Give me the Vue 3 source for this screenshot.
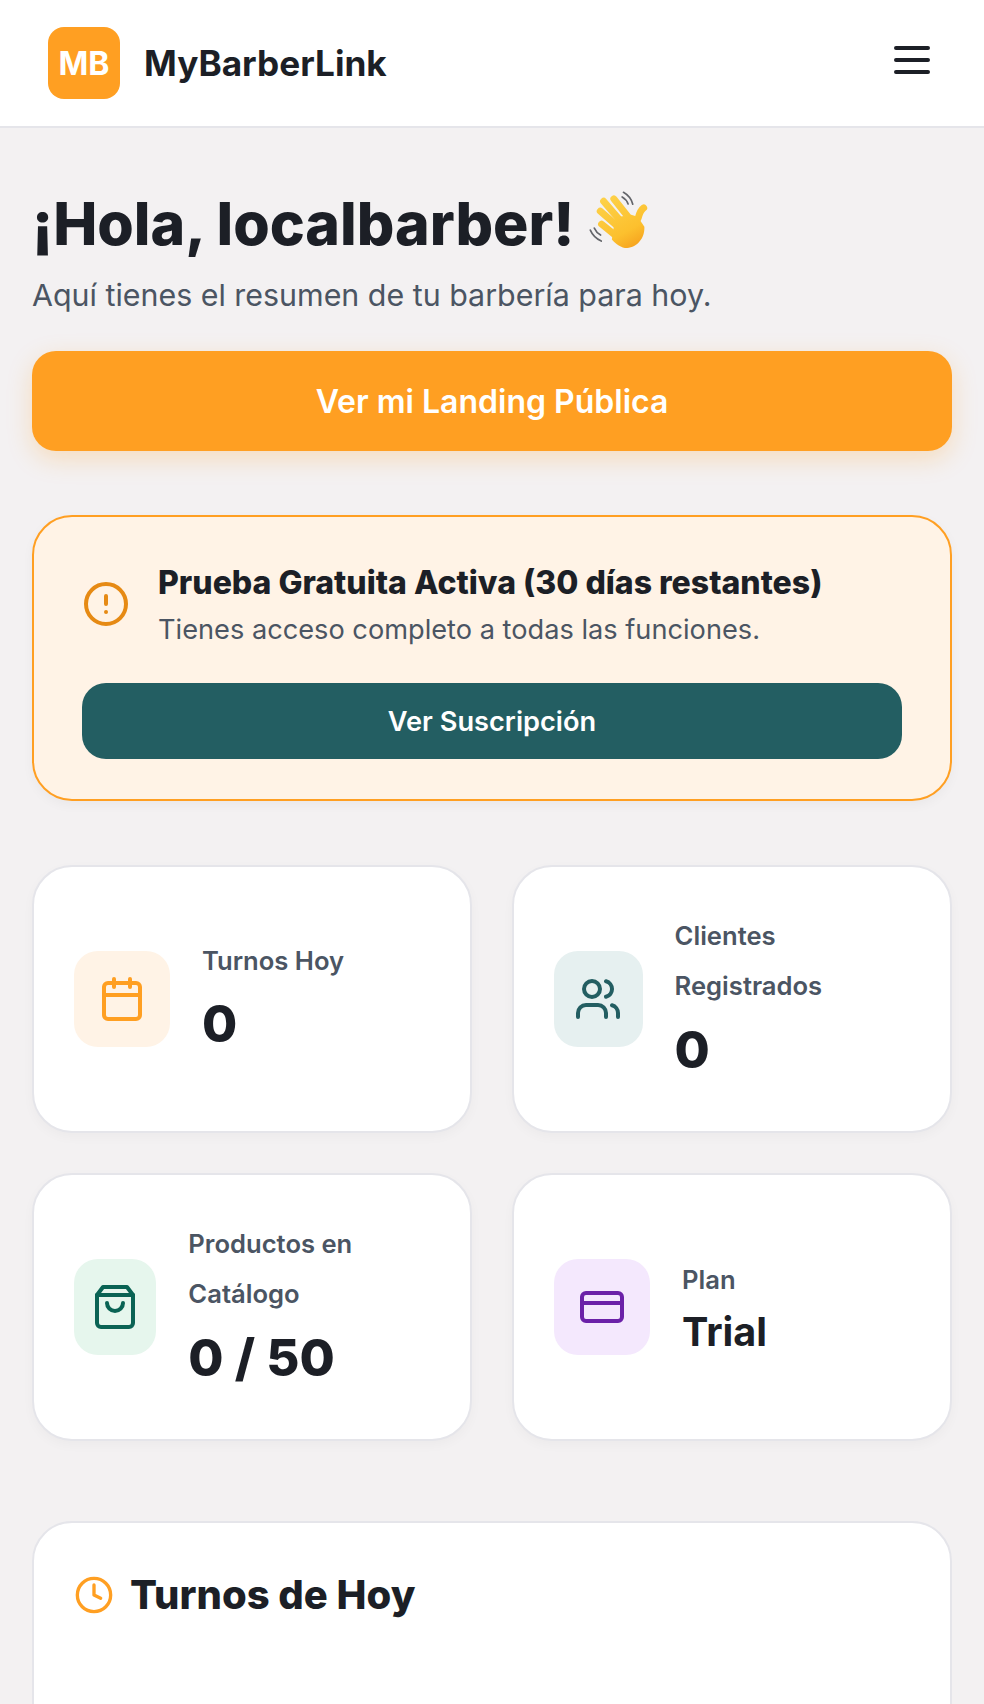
<script setup>
const stats = [
  { key: 'turnos', label: 'Turnos Hoy', value: '0', tone: 'orange' },
  { key: 'clientes', label: 'Clientes Registrados', value: '0', tone: 'teal' },
  { key: 'productos', label: 'Productos en Catálogo', value: '0 / 50', tone: 'green' },
  { key: 'plan', label: 'Plan', value: 'Trial', tone: 'purple', small: true }
]
</script>

<template>
  <div class="page">
    <header class="topbar">
      <div class="brand">
        <div class="logo">MB</div>
        <span class="brand-name">MyBarberLink</span>
      </div>
      <button class="menu-btn" aria-label="Menú">
        <svg viewBox="0 0 24 24" width="48" height="48" fill="none" stroke="currentColor" stroke-width="2" stroke-linecap="round" stroke-linejoin="round">
          <path d="M4 6h16M4 12h16M4 18h16" />
        </svg>
      </button>
    </header>

    <main class="content">
      <section class="welcome">
        <h1 class="greeting">
          <span>¡Hola, localbarber!</span>
          <svg class="wave" viewBox="50 60 190 190" width="63" height="63" aria-hidden="true">
            <defs>
              <linearGradient id="handFill" gradientUnits="userSpaceOnUse" x1="100" y1="80" x2="190" y2="240">
                <stop offset="0" stop-color="#fdd24a" />
                <stop offset="0.7" stop-color="#fcc02e" />
                <stop offset="1" stop-color="#f6a21e" />
              </linearGradient>
            </defs>
            <g fill="none" stroke-linecap="round">
              <g stroke="#63656a" stroke-width="5">
                <path d="M160 70c14 8 24 20 28 36" />
                <path d="M156 84c9 5 15 12 18 21" />
                <path d="M60 184c6 14 18 26 33 33" />
                <path d="M72 178c4 9 10 16 19 21" />
              </g>
              <g stroke="url(#handFill)" stroke-width="21">
                <path d="M100 97l52 60" />
                <path d="M131 90l46 58" />
                <path d="M90 127l58 50" />
                <path d="M94 166l50 40" />
                <path d="M221 117c-9 6-13 16-17 32" />
              </g>
            </g>
            <path d="M135 146l48-8 20 6 20 30c2 34-22 62-52 64-18 0-34-12-46-26z" fill="url(#handFill)" />
          </svg>
        </h1>
        <p class="subtitle">Aquí tienes el resumen de tu barbería para hoy.</p>
        <a class="landing-btn">Ver mi Landing Pública</a>
      </section>

      <section class="trial">
        <div class="trial-head">
          <svg class="trial-icon" viewBox="0 0 24 24" width="48" height="48" fill="none" stroke="currentColor" stroke-width="2" stroke-linecap="round" stroke-linejoin="round">
            <circle cx="12" cy="12" r="10" />
            <path d="M12 8v4M12 16h.01" />
          </svg>
          <div class="trial-body">
            <h2 class="trial-title">Prueba Gratuita Activa (30 días restantes)</h2>
            <p class="trial-text">Tienes acceso completo a todas las funciones.</p>
          </div>
        </div>
        <a class="trial-btn">Ver Suscripción</a>
      </section>

      <section class="stats">
        <article v-for="s in stats" :key="s.key" class="stat">
          <div class="stat-icon" :class="s.tone">
            <svg viewBox="0 0 24 24" width="48" height="48" fill="none" stroke="currentColor" stroke-width="2" stroke-linecap="round" stroke-linejoin="round">
              <template v-if="s.key === 'turnos'">
                <path d="M8 2v4M16 2v4" />
                <rect x="3" y="4" width="18" height="18" rx="2" />
                <path d="M3 10h18" />
              </template>
              <template v-else-if="s.key === 'clientes'">
                <path d="M16 21v-2a4 4 0 0 0-4-4H6a4 4 0 0 0-4 4v2" />
                <circle cx="9" cy="7" r="4" />
                <path d="M22 21v-2a4 4 0 0 0-3-3.87M16 3.13a4 4 0 0 1 0 7.75" />
              </template>
              <template v-else-if="s.key === 'productos'">
                <path d="M6 2 3 6v14a2 2 0 0 0 2 2h14a2 2 0 0 0 2-2V6l-3-4Z" />
                <path d="M3 6h18" />
                <path d="M16 10a4 4 0 0 1-8 0" />
              </template>
              <template v-else>
                <rect x="2" y="5" width="20" height="14" rx="2" />
                <path d="M2 10h20" />
              </template>
            </svg>
          </div>
          <div class="stat-body">
            <p class="stat-label">{{ s.label }}</p>
            <p class="stat-value" :class="{ small: s.small }">{{ s.value }}</p>
          </div>
        </article>
      </section>

      <section class="panel">
        <h2 class="panel-title">
          <svg viewBox="0 0 24 24" width="40" height="40" fill="none" stroke="#ff9f22" stroke-width="2" stroke-linecap="round" stroke-linejoin="round">
            <circle cx="12" cy="12" r="10" />
            <path d="M12 6v6l4 2" />
          </svg>
          Turnos de Hoy
        </h2>
      </section>
    </main>
  </div>
</template>

<style scoped>
.page {
  height: 1704px;
  overflow: hidden;
  background: #f3f1f2;
  color: #1c1f26;
  font-family: Inter, "Liberation Sans", sans-serif;
}

.topbar {
  display: flex;
  align-items: center;
  justify-content: space-between;
  height: 128px;
  box-sizing: border-box;
  padding: 0 48px;
  background: #fff;
  border-bottom: 2px solid #e5e5ea;
}

.brand {
  display: flex;
  align-items: center;
  gap: 24px;
}

.logo {
  display: flex;
  align-items: center;
  justify-content: center;
  width: 72px;
  height: 72px;
  border-radius: 16px;
  background: #ff9f22;
  color: #fff;
  font-size: 32px;
  font-weight: 700;
}

.brand-name {
  font-size: 35.2px;
  font-weight: 700;
}

.menu-btn {
  display: block;
  height: 48px;
  margin-bottom: 6px;
  padding: 0;
  border: 0;
  background: none;
  color: #1c1f26;
}

.menu-btn svg {
  display: block;
}

.content {
  padding: 60px 32px 0;
}

.greeting {
  display: flex;
  align-items: center;
  gap: 13px;
  margin: 0;
  font-size: 59px;
  font-weight: 800;
  line-height: 72px;
}

.wave {
  margin-top: -7px;
}

.subtitle {
  margin: 11px 0 0;
  font-size: 30.4px;
  line-height: 48px;
  color: #4b5563;
}

.landing-btn {
  display: flex;
  align-items: center;
  justify-content: center;
  height: 100px;
  margin-top: 32px;
  border-radius: 24px;
  background: #ff9f22;
  color: #fff;
  font-size: 32px;
  font-weight: 600;
  box-shadow: 0 8px 24px rgba(255, 159, 34, 0.25);
}

.trial {
  margin-top: 64px;
  padding: 40px 48px;
  border: 2px solid #ff9f22;
  border-radius: 40px;
  background: #fff3e6;
  box-shadow: 0 4px 12px rgba(0, 0, 0, 0.04);
}

.trial-head {
  display: flex;
  align-items: center;
  gap: 28px;
}

.trial-icon {
  flex: none;
  margin-bottom: 2px;
  color: #e68a14;
}

.trial-body {
  padding-top: 2px;
}

.trial-title {
  margin: 0;
  font-size: 32px;
  font-weight: 800;
  line-height: 48px;
}

.trial-text {
  margin: 0;
  font-size: 27.2px;
  line-height: 46px;
  color: #4b5563;
}

.trial-btn {
  display: flex;
  align-items: center;
  justify-content: center;
  height: 76px;
  margin-top: 30px;
  border-radius: 24px;
  background: #235e62;
  color: #fff;
  font-size: 27.2px;
  font-weight: 600;
}

.stats {
  display: grid;
  grid-template-columns: 1fr 1fr;
  gap: 40px;
  margin-top: 64px;
}

.stat {
  display: flex;
  align-items: center;
  gap: 32px;
  min-width: 0;
  min-height: 268px;
  box-sizing: border-box;
  padding: 40px;
  border: 2px solid #e5e5ea;
  border-radius: 40px;
  background: #fff;
  box-shadow: 0 4px 12px rgba(0, 0, 0, 0.03);
}

.stat-icon {
  display: flex;
  align-items: center;
  justify-content: center;
  flex: 0 1 96px;
  height: 96px;
  border-radius: 24px;
}

.stat-icon.orange { background: #fff3e6; color: #ff9f22; }
.stat-icon.teal { background: #e6f0f0; color: #235e62; }
.stat-icon.green { background: #e6f6ed; color: #0a6354; }
.stat-icon.purple { background: #f4e8fd; color: #6b21a8; }

.stat-body {
  flex: 0 1 auto;
  min-width: 0;
}

.stat-label {
  margin: 0;
  font-size: 25.6px;
  font-weight: 600;
  line-height: 50.5px;
  color: #4b5563;
}

.stat-value {
  margin: 0;
  font-size: 51px;
  font-weight: 800;
  line-height: 76px;
}

.stat-value.small {
  font-size: 39.6px;
  font-weight: 700;
  line-height: 54px;
}

.panel {
  height: 400px;
  margin-top: 80px;
  padding: 44px 40px 40px;
  border: 2px solid #e5e5ea;
  border-radius: 40px;
  background: #fff;
}

.panel-title {
  display: flex;
  align-items: center;
  gap: 16px;
  margin: 0;
  font-size: 40px;
  font-weight: 800;
  line-height: 56px;
}
</style>

<style>
html, body {
  margin: 0;
  background: #f3f1f2;
}
</style>
